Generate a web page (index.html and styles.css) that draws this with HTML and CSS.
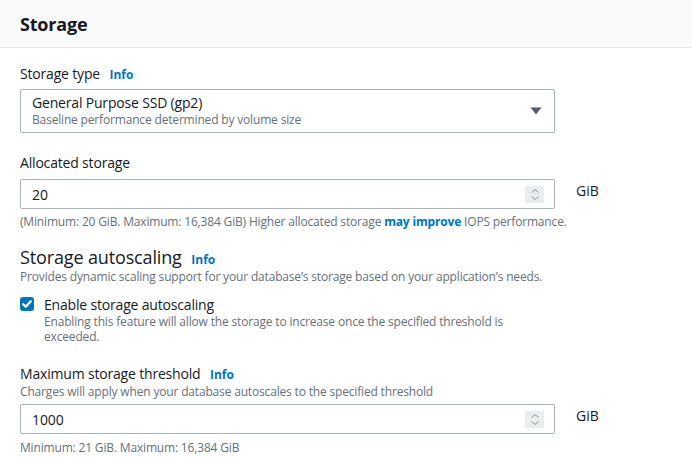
FILE: index.html
```html
<!DOCTYPE html>
<html lang="en">
<head>
<meta charset="utf-8">
<title>Storage</title>
<link rel="stylesheet" href="styles.css">
</head>
<body>
<div class="panel">
  <div class="panel-header"><h2>Storage</h2></div>
  <div class="panel-body">
    <div class="field f-type">
      <div class="label">Storage type <a class="info">Info</a></div>
      <div class="select">
        <div class="select-text">
          <div class="select-main">General Purpose SSD (gp2)</div>
          <div class="select-sub">Baseline performance determined by volume size</div>
        </div>
        <svg class="caret" width="12" height="8" viewBox="0 0 12 8"><path d="M0.5 0.5 H11.5 L6 7.5 Z" fill="#545b64"/></svg>
      </div>
    </div>

    <div class="field f-alloc">
      <div class="label">Allocated storage</div>
      <div class="input-row">
        <div class="input">
          <span class="value">20</span>
          <span class="spinner"><svg width="18" height="17" viewBox="0 0 18 17"><path d="M5.5 6.5 L9 3.5 L12.5 6.5 M5.5 10.5 L9 13.5 L12.5 10.5" fill="none" stroke="#879596" stroke-width="1"/></svg></span>
        </div>
        <span class="unit">GiB</span>
      </div>
      <div class="hint">(Minimum: 20 GiB. Maximum: 16,384 GiB) Higher allocated storage <a class="link">may improve</a> IOPS performance.</div>
    </div>

    <div class="section">
      <h3 class="section-title">Storage autoscaling <a class="info">Info</a></h3>
      <div class="desc">Provides dynamic scaling support for your database’s storage based on your application’s needs.</div>
      <div class="check-row">
        <span class="checkbox"><svg width="14" height="14" viewBox="0 0 14 14"><path d="M3.2 7.2 L5.8 9.8 L10.8 4.2" fill="none" stroke="#fff" stroke-width="2.2" stroke-linecap="round" stroke-linejoin="round"/></svg></span>
        <div class="check-text">
          <div class="check-label">Enable storage autoscaling</div>
          <div class="check-desc">Enabling this feature will allow the storage to increase once the specified threshold is<br>exceeded.</div>
        </div>
      </div>
    </div>

    <div class="field f-max">
      <div class="label">Maximum storage threshold <a class="info">Info</a></div>
      <div class="desc">Charges will apply when your database autoscales to the specified threshold</div>
      <div class="input-row">
        <div class="input">
          <span class="value">1000</span>
          <span class="spinner"><svg width="18" height="17" viewBox="0 0 18 17"><path d="M5.5 6.5 L9 3.5 L12.5 6.5 M5.5 10.5 L9 13.5 L12.5 10.5" fill="none" stroke="#879596" stroke-width="1"/></svg></span>
        </div>
        <span class="unit">GiB</span>
      </div>
      <div class="hint hint-last">Minimum: 21 GiB. Maximum: 16,384 GiB</div>
    </div>
  </div>
</div>
</body>
</html>
```

FILE: styles.css
```css
html, body {
  margin: 0;
  padding: 0;
  background: #ffffff;
}
body {
  font-family: "Open Sans", "Noto Sans", Arial, sans-serif;
  color: #16191f;
  font-size: 14px;
}
.panel-header {
  height: 47px;
  background: #fafafa;
  border-bottom: 1px solid #eaeded;
  display: flex;
  align-items: center;
  padding-left: 20px;
}
.panel-header h2 {
  margin: 0;
  font-size: 18px;
  font-weight: 700;
  line-height: 22px;
  letter-spacing: -0.2px;
}
.panel-body {
  padding: 15px 20px 0 20px;
}
.label {
  font-size: 14px;
  line-height: 22px;
  letter-spacing: -0.18px;
}
.info {
  color: #0073bb;
  font-weight: 700;
  font-size: 12px;
  margin-left: 6px;
  letter-spacing: 0;
}
.f-type .label { margin-bottom: 3px; }
.select {
  width: 535px;
  height: 44px;
  box-sizing: border-box;
  border: 1px solid #aab7b8;
  border-radius: 2px;
  display: flex;
  align-items: center;
  justify-content: space-between;
  padding: 0 12px 0 11px;
}
.select-main {
  font-size: 14px;
  line-height: 18px;
  letter-spacing: -0.18px;
}
.select-sub {
  font-size: 12px;
  line-height: 16px;
  color: #687078;
  letter-spacing: -0.17px;
}
.f-alloc { margin-top: 19px; }
.f-alloc .label { margin-bottom: 5px; }
.input-row {
  display: flex;
  align-items: center;
}
.input {
  width: 535px;
  height: 30px;
  box-sizing: border-box;
  border: 1px solid #aab7b8;
  border-radius: 2px;
  display: flex;
  align-items: center;
  justify-content: space-between;
  padding: 0 10px 0 11px;
}
.value {
  font-size: 14px;
  letter-spacing: -0.1px;
}
.spinner {
  width: 19px;
  height: 17px;
  background: #eaeded;
  display: flex;
  align-items: center;
  justify-content: center;
}
.spinner svg { display: block; }
.unit {
  margin-left: 21px;
  font-size: 14px;
  margin-top: -8px;
}
.hint {
  font-size: 12px;
  line-height: 16px;
  color: #687078;
  margin-top: 5px;
  letter-spacing: -0.17px;
}
.hint-last { margin-top: 6px; }
.link {
  color: #0073bb;
  font-weight: 700;
}
.section { margin-top: 16px; }
.section-title {
  margin: 0;
  font-size: 18px;
  font-weight: 400;
  line-height: 22px;
  letter-spacing: -0.14px;
}
.section-title .info { margin-left: 5px; }
.desc {
  font-size: 12px;
  line-height: 16px;
  color: #687078;
  letter-spacing: -0.17px;
}
.section .desc { margin-top: -2px; }
.check-row {
  display: flex;
  align-items: flex-start;
  margin-top: 11px;
}
.checkbox {
  width: 14px;
  height: 14px;
  border-radius: 3px;
  background: #0073bb;
  margin-top: 1px;
  flex: none;
}
.checkbox svg { display: block; }
.check-text { margin-left: 10px; }
.check-label {
  font-size: 14px;
  line-height: 18px;
  letter-spacing: -0.18px;
}
.check-desc {
  font-size: 12px;
  line-height: 15px;
  color: #687078;
  margin-top: 0;
  letter-spacing: -0.17px;
}
.f-max { margin-top: 21px; }
.f-max .label { line-height: 18px; }
.f-max .desc { margin-bottom: 4px; }
```
